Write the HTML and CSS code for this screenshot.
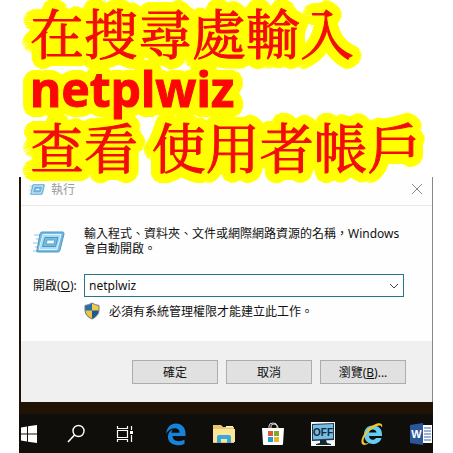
FILE: index.html
```html
<!DOCTYPE html>
<html lang="zh-Hant">
<head>
<meta charset="utf-8">
<meta name="viewport" content="width=device-width, initial-scale=1">
<title>netplwiz</title>
<link rel="stylesheet" href="styles.css">
</head>
<body>
<h1 class="headline">
  <span class="line">在搜尋處輸入</span>
  <span class="line latin">netplwiz</span>
  <span class="line">查看 使用者帳戶</span>
</h1>
<main class="desktop">
  <form class="dialog">
    <header class="titlebar">
      <svg class="run-small" viewBox="0 0 32 26" aria-hidden="true"><use href="#run"/></svg>
      <h2 class="title">執行</h2>
      <button class="close" type="button" aria-label="關閉">
        <svg viewBox="0 0 12 12" aria-hidden="true"><path d="M1 1l10 10M11 1L1 11" fill="none" stroke="#8b8b8b"/></svg>
      </button>
    </header>
    <div class="content">
      <svg class="run-large" viewBox="0 0 32 26" aria-hidden="true">
        <g id="run">
          <path d="M1 6h8M3 10h6M0 14h6M2 18h4M0 22h4" stroke="#8fc3de" stroke-width="1.2"/>
          <path d="M9 3h21q1 0 1 2l-4 16q-.5 2-2 2H5q-2 0-1-2L7 5q.5-2 2-2z" fill="#79b9df" stroke="#4c96c4" stroke-width="1"/>
          <path d="M10 5.500h18l-4 15H6z" fill="#a9dcf3" stroke="#d9f4fd"/>
          <path d="M12 8.500h13l-2.500 9H9.500z" fill="#7bbde2" stroke="#4a93c0"/>
          <path d="M14 11h8l-1 4h-8z" fill="#eafaff" stroke="#5b9fc8"/>
        </g>
      </svg>
      <p class="message">輸入程式、資料夾、文件或網際網路資源的名稱，Windows 會自動開啟。</p>
      <label class="label" for="command">開啟(<u>O</u>):</label>
      <div class="combo">
        <input id="command" type="text" value="netplwiz" spellcheck="false">
        <button class="drop" type="button" aria-label="展開清單">
          <svg viewBox="0 0 10 6" aria-hidden="true"><path d="M1 1l4 4 4-4" fill="none" stroke="#444"/></svg>
        </button>
      </div>
      <p class="notice">
        <svg viewBox="0 0 16 18" aria-hidden="true">
          <path d="M8 1Q5 3 1 3.500V8q0 6 7 9z" fill="#286eae"/>
          <path d="M8 1q3 2 7 2.500V8q0 6-7 9z" fill="#f4c849"/>
          <path d="M1 8.500h7V17Q2 14 1 8.500z" fill="#f0c23e"/>
          <path d="M8 8.500h7Q14 14 8 17z" fill="#1c598f"/>
          <path d="M8 1Q5 3 1 3.500V8q0 6 7 9 7-3 7-9V3.500Q11 3 8 1z" fill="none" stroke="#697987"/>
        </svg>
        <span>必須有系統管理權限才能建立此工作。</span>
      </p>
    </div>
    <footer class="actions">
      <button type="button">確定</button>
      <button type="button">取消</button>
      <button type="button">瀏覽(<u>B</u>)...</button>
    </footer>
  </form>
  <nav class="taskbar" aria-label="工作列">
    <button class="start" type="button" aria-label="開始">
      <svg viewBox="0 0 20 24" aria-hidden="true"><path d="M2 5.500l6-1v7H2zM9 4.300l9-1.300v8.500H9zM2 12.500h6v7l-6-1zM9 12.500h9V21l-9-1.300z" fill="#fff"/></svg>
    </button>
    <button type="button" aria-label="搜尋">
      <svg viewBox="0 0 24 24" aria-hidden="true"><circle cx="14.500" cy="9" r="5.500" fill="none" stroke="#fff" stroke-width="1.400"/><path d="M10.500 13L4 20" stroke="#fff" stroke-width="1.600"/></svg>
    </button>
    <button type="button" aria-label="工作檢視">
      <svg viewBox="0 0 24 24" aria-hidden="true"><path d="M3.500 4v2.500h10V4M3.500 20v-2.500h10V20M3.500 8.500h10v7h-10zM17.500 4v4M17.500 13v7" fill="none" stroke="#fff" stroke-width="1.200"/><path d="M16 9h3v3h-3z" fill="#fff"/></svg>
    </button>
    <button type="button" aria-label="Edge">
      <svg viewBox="0 0 24 24" aria-hidden="true"><path d="M3 11.500C4 5 8 1.500 13 1.500c6 0 9.500 4.500 9.500 9.500v3H9.500c.2 5.500 7 6.500 12 3.500v4.200c-3 1.500-6 1.800-8.500 1.300C7 22 4.500 18 5 14c.3-3 2-5.500 5-6.500-1 1-1.400 2-1.500 3.200h8C17 4.500 7 4.500 3 11.500z" fill="#1683dc"/></svg>
    </button>
    <button type="button" aria-label="檔案總管">
      <svg viewBox="0 0 24 24" aria-hidden="true"><path d="M1 3h8l2 2h11v16H1z" fill="#e8c66a"/><path d="M1 7h22v13H1z" fill="#fae59b"/><path d="M14 4h7v1.500h-7z" fill="#fff5c9"/><path d="M5 21v-6q0-2 2-2h10q2 0 2 2v6h-4v-4H9v4z" fill="#38a9db"/></svg>
    </button>
    <button type="button" aria-label="Store">
      <svg viewBox="0 0 24 24" aria-hidden="true"><path d="M8 7V4q0-3 4-3t4 3v3M10 7V4q0-2 3-2t4 3v2" fill="none" stroke="#ddd"/><path d="M1 6h22l-1 16q0 1-1 1H3q-1 0-1-1z" fill="#fff"/><path d="M7 9h5v5H7z" fill="#e65336"/><path d="M13 9h5v5h-5z" fill="#7cab2c"/><path d="M7 15h5v5H7z" fill="#2499cf"/><path d="M13 15h5v5h-5z" fill="#f1b52b"/></svg>
    </button>
    <button type="button" aria-label="關閉螢幕">
      <svg viewBox="0 0 24 24" aria-hidden="true"><path d="M0 0h24v24H0z" fill="#f5fafc"/><path d="M1 2l22-1v17L1 19z" fill="#213948"/><path d="M2 3l20-1v14.500L2 17.500z" fill="#77bce4"/><path d="M9 18h6l1 3 4 1v1H5v-1l4-1z" fill="#172633"/><text class="off" x="12" y="14" text-anchor="middle">OFF</text></svg>
    </button>
    <button type="button" aria-label="Internet Explorer">
      <svg viewBox="0 0 24 24" aria-hidden="true"><path d="M13 3.500c-6 0-9 4-9 9s3.500 9.500 9 9.500c4.500 0 7.500-2.500 8.500-6H16c-2 3-7 2-7-2h13c.5-6.500-3-10.500-9-10.500zM9 10.500c.5-4 7-4 7.500 0z" fill="#63cdf3"/><path d="M2 22C-1 17 8 4 17 1.500c4-1 6 .5 5 4C21 2.500 18 3 14 5.500 7 10 2 17 4 20.500q2 2 6-.5C7 23 4 24 2 22z" fill="#f4c42f"/></svg>
    </button>
    <button type="button" aria-label="Word">
      <svg viewBox="0 0 24 24" aria-hidden="true"><path d="M12 3h11v18H12z" fill="#fff"/><path d="M15 6h7M15 9h7M15 12h7M15 15h7M15 18h7" stroke="#386ab0" stroke-width="1.200"/><path d="M1 3l13-2v22L1 21z" fill="#2b579a"/><text class="word" x="7.500" y="16" text-anchor="middle">W</text></svg>
    </button>
  </nav>
</main>
</body>
</html>
```
FILE: styles.css
```css
* { box-sizing: border-box; }

body {
  margin: 0;
  background: #fff;
  color: #111;
  font: 12px/15px "Noto Sans", "Noto Sans CJK TC", sans-serif;
}

button {
  padding: 0;
  border: 0;
  background: none;
  color: inherit;
  font: inherit;
}

svg { display: block; }
p, h1, h2 { margin: 0; }

/* The outline is made of rings of shadows around the letters. */
.headline {
  position: relative;
  z-index: 1;
  padding: 3px 16px 3px 30px;
  color: #f30c0c;
  font: 400 54px/57px "Noto Serif CJK TC", "Noto Sans CJK TC", serif;
  -webkit-text-stroke: 1px #f30c0c;
  text-shadow:
    10px 0 #ff0, 10px 2px #ff0, 9px 4px #ff0, 8px 6px #ff0, 7px 7px #ff0, 6px 8px #ff0, 4px 9px #ff0, 2px 10px #ff0,
    0 10px #ff0, -2px 10px #ff0, -4px 9px #ff0, -6px 8px #ff0, -7px 7px #ff0, -8px 6px #ff0, -9px 4px #ff0, -10px 2px #ff0,
    -10px 0 #ff0, -10px -2px #ff0, -9px -4px #ff0, -8px -6px #ff0, -7px -7px #ff0, -6px -8px #ff0, -4px -9px #ff0, -2px -10px #ff0,
    0 -10px #ff0, 2px -10px #ff0, 4px -9px #ff0, 6px -8px #ff0, 7px -7px #ff0, 8px -6px #ff0, 9px -4px #ff0, 10px -2px #ff0,
    8px 0 #ff0, 7px 3px #ff0, 5px 5px #ff0, 3px 7px #ff0,
    0 8px #ff0, -3px 7px #ff0, -5px 5px #ff0, -7px 3px #ff0,
    -8px 0 #ff0, -7px -3px #ff0, -5px -5px #ff0, -3px -7px #ff0,
    0 -8px #ff0, 3px -7px #ff0, 5px -5px #ff0, 7px -3px #ff0,
    6px 0 #ff0, 4px 4px #ff0, 0 6px #ff0, -4px 4px #ff0,
    -6px 0 #ff0, -4px -4px #ff0, 0 -6px #ff0, 4px -4px #ff0,
    4px 0 #ff0, 3px 3px #ff0, 0 4px #ff0, -3px 3px #ff0,
    -4px 0 #ff0, -3px -3px #ff0, 0 -4px #ff0, 3px -3px #ff0,
    2px 0 #ff0, 0 2px #ff0, -2px 0 #ff0, 0 -2px #ff0;
}

/* Multiply keeps the red strokes visible where two outlines meet. */
.line {
  display: block;
  white-space: nowrap;
  mix-blend-mode: multiply;
}

.latin {
  color: #ff0505;
  font: 700 48px/57px "Noto Sans", sans-serif;
}

.desktop {
  margin: 0 20px 0 19px;
  background: #211303;
}

.dialog {
  margin-left: 2px;
  border-right: 1px solid #888;
  background: #fefefe;
}

.titlebar {
  display: flex;
  align-items: center;
  gap: 6px;
  height: 29px;
  padding: 0 9px 4px 8px;
  border-bottom: 1px solid #e8e8e8;
  color: #999;
}

.run-small { width: 16px; height: 13px; }
.title { flex: 1; font: inherit; }
.close svg { width: 12px; height: 12px; }

.content {
  display: grid;
  grid-template-columns: 51px 1fr;
  column-gap: 0;
  padding: 20px 28px 21px 12px;
}

.run-large { width: 32px; height: 26px; margin-top: 3px; }
.message { margin-right: -4px; }
.label { align-self: center; white-space: nowrap; }

.combo {
  display: flex;
  align-items: center;
  height: 23px;
  padding: 0 4px;
  border: 1px solid #26758e;
  background: #fff;
}

.content .label, .combo { margin-top: 18px; }

.combo input {
  flex: 1;
  min-width: 0;
  padding: 0;
  border: 0;
  outline: 0;
  background: none;
  color: inherit;
  font: inherit;
}

.drop svg { width: 10px; height: 6px; }

.notice {
  display: flex;
  grid-column: 2;
  align-items: center;
  gap: 9px;
  margin-top: 5px;
}

.notice svg { width: 16px; height: 18px; }

.actions {
  display: flex;
  justify-content: flex-end;
  gap: 8px;
  padding: 19px 26px 18px;
  background: #f0f0f0;
}

.actions button {
  width: 86px;
  height: 24px;
  border: 1px solid #adadad;
  background: #e1e1e1;
}

.taskbar {
  display: flex;
  align-items: center;
  justify-content: space-between;
  height: 39px;
  margin-top: 12px;
  background: #100e0b;
}

.taskbar svg { width: 24px; height: 24px; }
.taskbar .start svg { width: 20px; }

.off { fill: #102b3c; font: 700 10px "Liberation Sans", sans-serif; }
.word { fill: #fff; font: 700 11px "Liberation Sans", sans-serif; }
```
